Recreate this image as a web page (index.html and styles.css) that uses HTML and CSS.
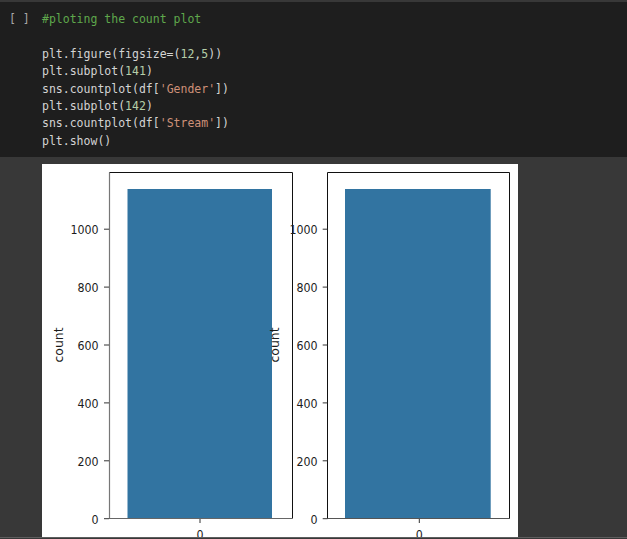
FILE: index.html
```html
<!DOCTYPE html>
<html>
<head>
<meta charset="utf-8">
<link rel="stylesheet" href="styles.css">
</head>
<body>
<div class="page">
  <div class="cell">
    <div class="run">[ ]</div>
    <pre class="code"><span class="cm">#ploting the count plot</span>

plt.figure(figsize=(<span class="nu">12</span>,<span class="nu">5</span>))
plt.subplot(<span class="nu">141</span>)
sns.countplot(df[<span class="st">'Gender'</span>])
plt.subplot(<span class="nu">142</span>)
sns.countplot(df[<span class="st">'Stream'</span>])
plt.show()</pre>
  </div>
  <div class="output">
    <svg class="plot" width="476" height="380" viewBox="0 0 476 380" xmlns="http://www.w3.org/2000/svg">
      <rect x="0" y="0" width="476" height="380" fill="#ffffff"/>
      <!-- left subplot -->
      <rect x="85.5" y="25" width="144.5" height="329.5" fill="#3274a1"/>
      <path d="M67.5 354.5 V8.5" stroke="#777" stroke-width="1.2" fill="none"/>
      <path d="M67.5 8.5 H250.5 V354.5" stroke="#111" stroke-width="1" fill="none"/>
      <path d="M67 354.5 H250.5" stroke="#666" stroke-width="1.2" fill="none"/>
      <g stroke="#333" stroke-width="1">
        <path d="M62 354.7 H67"/><path d="M62 296.8 H67"/><path d="M62 238.9 H67"/>
        <path d="M62 181 H67"/><path d="M62 123.1 H67"/><path d="M62 65.2 H67"/>
        <path d="M158 355 V359"/>
      </g>
      <g font-family="DejaVu Sans, sans-serif" font-size="13" fill="#1c1c1c" text-anchor="end">
        <text transform="translate(56.5,359.5) scale(0.85,1)">0</text>
        <text transform="translate(56.5,301.6) scale(0.85,1)">200</text>
        <text transform="translate(56.5,243.7) scale(0.85,1)">400</text>
        <text transform="translate(56.5,185.8) scale(0.85,1)">600</text>
        <text transform="translate(56.5,127.9) scale(0.85,1)">800</text>
        <text transform="translate(56.5,70) scale(0.85,1)">1000</text>
      </g>
      <text font-family="DejaVu Sans, sans-serif" font-size="13" fill="#1c1c1c" text-anchor="middle" transform="translate(158,374.8) scale(0.85,1)">0</text>
      <text font-family="DejaVu Sans, sans-serif" font-size="12.5" fill="#1c1c1c" text-anchor="middle" transform="translate(20.5,181) rotate(-90) scale(1,0.92)">count</text>

      <!-- right subplot -->
      <rect x="303" y="25" width="145.7" height="329.5" fill="#3274a1"/>
      <path d="M285.5 354.5 V8.5 H467.5 V354.5" stroke="#111" stroke-width="1" fill="none"/>
      <path d="M285 354.5 H468" stroke="#555" stroke-width="1.2" fill="none"/>
      <g stroke="#333" stroke-width="1">
        <path d="M280.7 354.7 H285.5"/><path d="M280.7 296.8 H285.5"/><path d="M280.7 238.9 H285.5"/>
        <path d="M280.7 181 H285.5"/><path d="M280.7 123.1 H285.5"/><path d="M280.7 65.2 H285.5"/>
        <path d="M377.3 355 V359"/>
      </g>
      <g font-family="DejaVu Sans, sans-serif" font-size="13" fill="#1c1c1c" text-anchor="end">
        <text transform="translate(275.5,359.5) scale(0.85,1)">0</text>
        <text transform="translate(275.5,301.6) scale(0.85,1)">200</text>
        <text transform="translate(275.5,243.7) scale(0.85,1)">400</text>
        <text transform="translate(275.5,185.8) scale(0.85,1)">600</text>
        <text transform="translate(275.5,127.9) scale(0.85,1)">800</text>
        <text transform="translate(275.5,70) scale(0.85,1)">1000</text>
      </g>
      <text font-family="DejaVu Sans, sans-serif" font-size="13" fill="#1c1c1c" text-anchor="middle" transform="translate(377.3,374.8) scale(0.85,1)">0</text>
      <text font-family="DejaVu Sans, sans-serif" font-size="12.5" fill="#1c1c1c" text-anchor="middle" transform="translate(237,181) rotate(-90) scale(1,0.92)">count</text>
    </svg>
  </div>
</div>
</body>
</html>
```

FILE: styles.css
```css
html, body {
  margin: 0;
  padding: 0;
  background: #383838;
  overflow: hidden;
}

.page {
  width: 627px;
  height: 539px;
  display: flex;
  flex-direction: column;
  overflow: hidden;
}

.cell {
  margin-top: 2px;
  height: 155px;
  background: #1e1e1e;
  display: flex;
  box-sizing: border-box;
  padding-top: 9px;
}

.run {
  width: 42px;
  box-sizing: border-box;
  padding-left: 9px;
  font-family: "DejaVu Sans Mono", monospace;
  font-size: 11.5px;
  line-height: 17.5px;
  color: #a8a8a8;
  white-space: pre;
}

.code {
  margin: 0;
  font-family: "DejaVu Sans Mono", "Liberation Mono", monospace;
  font-size: 11.5px;
  line-height: 17.4px;
  color: #d4d4d4;
}

.cm { color: #5fa84c; }
.nu { color: #b5cea8; }
.st { color: #ce9178; }

.output {
  height: 381px;
  box-sizing: border-box;
  padding: 7px 0 0 42px;
  border-bottom: 1px solid #5e5e5e;
  overflow: hidden;
}

.plot {
  display: block;
}
```
